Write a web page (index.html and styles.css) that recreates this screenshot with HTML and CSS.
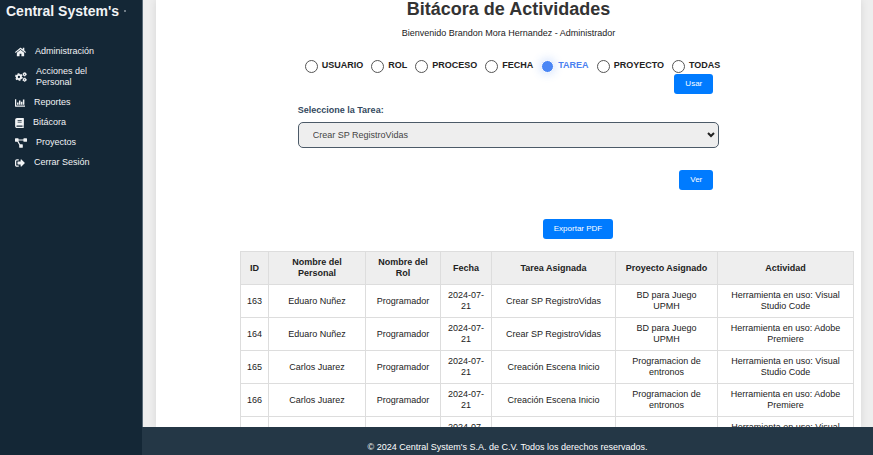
FILE: index.html
```html
<!DOCTYPE html>
<html lang="es">
<head>
<meta charset="utf-8">
<meta name="viewport" content="width=device-width, initial-scale=1">
<title>Bitácora de Actividades</title>
<link rel="stylesheet" href="styles.css">
</head>
<body>
<aside class="sidebar">
  <div class="brand">Central System's <span class="brand-dot"></span></div>
  <nav class="menu">
    <a href="#"><svg width="11" height="10" viewBox="0 0 576 512"><path d="M280 148 96 300v164c0 9 7 16 16 16h112c9 0 16-7 16-16v-96c0-9 7-16 16-16h64c9 0 16 7 16 16v96c0 9 7 16 16 16h112c9 0 16-7 16-16V300L296 148c-5-4-11-4-16 0zM572 251l-84-69V44c0-7-5-12-12-12h-56c-7 0-12 5-12 12v72l-90-74c-17-14-43-14-60 0L4 251c-5 4-6 12-2 17l26 31c4 5 12 6 17 2l235-194c5-4 11-4 16 0l235 194c5 4 13 3 17-2l26-31c4-5 3-13-2-17z"/></svg>Administración</a>
    <a href="#"><svg width="12" height="10" viewBox="0 0 640 512"><g fill="none" stroke="currentColor"><circle cx="208" cy="256" r="112" stroke-width="100"/><circle cx="208" cy="256" r="170" stroke-width="72" stroke-dasharray="98 80"/><circle cx="512" cy="112" r="60" stroke-width="66"/><circle cx="512" cy="112" r="92" stroke-width="44" stroke-dasharray="54 42"/><circle cx="512" cy="400" r="60" stroke-width="66"/><circle cx="512" cy="400" r="92" stroke-width="44" stroke-dasharray="54 42"/></g></svg><span>Acciones del Personal</span></a>
    <a href="#"><svg width="10" height="10" viewBox="0 0 512 512"><path d="M0 64h64v320h448v64H24c-14 0-24-10-24-24zM104 224h76v120h-76zM204 128h76v216h-76zM304 192h76v152h-76zM404 80h76v264h-76z"/></svg>Reportes</a>
    <a href="#"><svg width="9" height="10" viewBox="0 0 448 512"><path fill-rule="evenodd" d="M448 360V24c0-13-11-24-24-24H96C43 0 0 43 0 96v320c0 53 43 96 96 96h328c13 0 24-11 24-24v-16c0-8-4-14-9-19-4-15-4-59 0-74 5-4 9-11 9-19zM128 120h208v36H128zm0 72h208v36H128zM381 448H96c-43 0-43-64 0-64h285c-2 17-2 47 0 64z"/></svg>Bitácora</a>
    <a href="#"><svg width="12" height="10" viewBox="0 0 640 512"><path d="M384 320H274L192 176v-48h256v32c0 18 14 32 32 32h128c18 0 32-14 32-32V32c0-18-14-32-32-32H480c-18 0-32 14-32 32v32H192V32c0-18-14-32-32-32H32C14 0 0 14 0 32v128c0 18 14 32 32 32h96l96 165v123c0 18 14 32 32 32h128c18 0 32-14 32-32V352c0-18-14-32-32-32z"/></svg>Proyectos</a>
    <a href="#"><svg width="10" height="10" viewBox="0 0 512 512"><path d="M497 273 329 441c-15 15-41 4-41-17v-96H152c-13 0-24-11-24-24v-96c0-13 11-24 24-24h136V88c0-21 26-32 41-17l168 168c9 9 9 25 0 34zM192 436v-40c0-7-5-12-12-12H96c-18 0-32-14-32-32V160c0-18 14-32 32-32h84c7 0 12-5 12-12V76c0-7-5-12-12-12H96c-53 0-96 43-96 96v192c0 53 43 96 96 96h84c7 0 12-5 12-12z"/></svg>Cerrar Sesión</a>
  </nav>
</aside>
<div class="page">
  <main class="card">
    <h1>Bitácora de Actividades</h1>
    <p class="welcome">Bienvenido Brandon Mora Hernandez - Administrador</p>
    <form class="filters">
      <div class="options">
        <label><input type="radio" name="filtro">USUARIO</label>
        <label><input type="radio" name="filtro">ROL</label>
        <label><input type="radio" name="filtro">PROCESO</label>
        <label><input type="radio" name="filtro">FECHA</label>
        <label><input type="radio" name="filtro" checked>TAREA</label>
        <label><input type="radio" name="filtro">PROYECTO</label>
        <label><input type="radio" name="filtro">TODAS</label>
      </div>
      <div class="actions"><button type="button">Usar</button></div>
      <label class="field-label" for="tarea">Seleccione la Tarea:</label>
      <div class="select-box">
        <select id="tarea"><option>Crear SP RegistroVidas</option></select>
        <svg class="chevron" width="8" height="6" viewBox="0 0 8 6"><path d="M1 1l3 3 3-3"/></svg>
      </div>
      <div class="actions"><button type="button">Ver</button></div>
    </form>
    <section class="results">
      <div class="export"><button type="button">Exportar PDF</button></div>
      <table>
        <colgroup><col class="c-id"><col class="c-name"><col class="c-role"><col class="c-date"><col class="c-task"><col class="c-project"><col class="c-activity"></colgroup>
        <thead><tr><th>ID</th><th>Nombre del Personal</th><th>Nombre del Rol</th><th>Fecha</th><th>Tarea Asignada</th><th>Proyecto Asignado</th><th>Actividad</th></tr></thead>
        <tbody>
          <tr><td>163</td><td>Eduaro Nuñez</td><td>Programador</td><td>2024-07-21</td><td>Crear SP RegistroVidas</td><td>BD para Juego UPMH</td><td>Herramienta en uso: Visual Studio Code</td></tr>
          <tr><td>164</td><td>Eduaro Nuñez</td><td>Programador</td><td>2024-07-21</td><td>Crear SP RegistroVidas</td><td>BD para Juego UPMH</td><td>Herramienta en uso: Adobe Premiere</td></tr>
          <tr><td>165</td><td>Carlos Juarez</td><td>Programador</td><td>2024-07-21</td><td>Creación Escena Inicio</td><td>Programacion de entronos</td><td>Herramienta en uso: Visual Studio Code</td></tr>
          <tr><td>166</td><td>Carlos Juarez</td><td>Programador</td><td>2024-07-21</td><td>Creación Escena Inicio</td><td>Programacion de entronos</td><td>Herramienta en uso: Adobe Premiere</td></tr>
          <tr><td></td><td></td><td></td><td>2024-07-21</td><td></td><td></td><td>Herramienta en uso: Visual Studio Code</td></tr>
        </tbody>
      </table>
    </section>
  </main>
  <footer>© 2024 Central System's S.A. de C.V. Todos los derechos reservados.</footer>
</div>
</body>
</html>
```
FILE: styles.css
```css
* { box-sizing: border-box; }

body {
  display: flex;
  height: 100vh;
  margin: 0;
  overflow: hidden;
  font: 9px/11px "Liberation Sans", Arial, sans-serif;
  color: #222;
  background: #eee;
}

.sidebar {
  flex: 0 0 143px;
  border-right: 1px solid #5a6b78;
  background: #142736;
  color: #f1f3f5;
}

.brand {
  display: flex;
  align-items: center;
  gap: 5px;
  padding: 3px 6px;
  font-size: 14px;
  line-height: 16px;
  font-weight: bold;
  white-space: nowrap;
}

.brand-dot {
  width: 2px;
  height: 2px;
  border-radius: 50%;
  background: #8d98a2;
}

.menu {
  display: flex;
  flex-direction: column;
  gap: 9px;
  padding: 24px 40px 0 15px;
}

.menu a {
  display: flex;
  align-items: center;
  gap: 9px;
  color: inherit;
  text-decoration: none;
}

.menu svg {
  flex: none;
  fill: currentColor;
}

.page {
  flex: 1;
  min-width: 0;
  display: flex;
  flex-direction: column;
}

.card {
  flex: 1;
  min-height: 0;
  overflow: hidden;
  margin: 0 12px 0 13px;
  padding: 0 7px;
  background: #fff;
  box-shadow: 0 0 8px rgba(0, 0, 0, 0.1);
}

h1 {
  margin: 0;
  padding-top: 2px;
  font-size: 18px;
  line-height: 14px;
  text-align: center;
  color: #333;
}

.welcome {
  margin: 12px 0 0;
  text-align: center;
}

.filters {
  width: 61%;
  margin: 20px auto 0;
}

.options {
  display: flex;
  gap: 8px;
  padding-left: 7px;
}

.options label {
  display: flex;
  gap: 4px;
  font-weight: bold;
  line-height: 12px;
}

.options label:has(:checked) { color: #4a80f0; }

.options input {
  appearance: none;
  width: 13px;
  height: 13px;
  margin: 1px 0 0;
  border: 1px solid #555;
  border-radius: 50%;
  background: #fff;
}

.options input:checked {
  border: 1px solid #fff;
  background: #4a86f5;
  box-shadow: 0 0 8px 2px rgba(74, 134, 245, 0.2);
}

.actions {
  display: flex;
  justify-content: flex-end;
  padding: 1px 6px 0 0;
}

button {
  height: 20px;
  padding: 0 11px;
  border: 0;
  border-radius: 3px;
  font: 8px/10px "Liberation Sans", Arial, sans-serif;
  color: #fff;
  background: #007bff;
}

.field-label {
  display: block;
  margin: 11px 0 6px;
  font-weight: bold;
  color: #34495e;
}

.select-box {
  position: relative;
  margin-bottom: 21px;
}

select {
  appearance: none;
  display: block;
  width: 100%;
  height: 26px;
  padding: 0 14px;
  border: 1px solid #4c5a68;
  border-radius: 5px;
  font: inherit;
  color: #444;
  background: #eee;
}

.chevron {
  position: absolute;
  top: 10px;
  right: 4px;
  fill: none;
  stroke: #222;
  stroke-width: 2;
  pointer-events: none;
}

.results {
  margin: 29px 0 0 77px;
}

.export {
  display: flex;
  justify-content: center;
  padding: 0 0 12px 62px;
}

table {
  width: 100%;
  table-layout: fixed;
  border-collapse: collapse;
  text-align: center;
}

th, td {
  height: 33px;
  padding: 5px 6px;
  border: 1px solid #ddd;
}

td:nth-child(6) { padding: 5px 10px; }

th { background: #eee; }

.c-id { width: 28px; }
.c-name { width: 97px; }
.c-role { width: 75px; }
.c-date { width: 51px; }
.c-task { width: 124px; }
.c-project { width: 102px; }

footer {
  flex: none;
  margin-left: -1px;
  padding: 15px 10px 2px;
  text-align: center;
  color: #fff;
  background: #243746;
}
```
